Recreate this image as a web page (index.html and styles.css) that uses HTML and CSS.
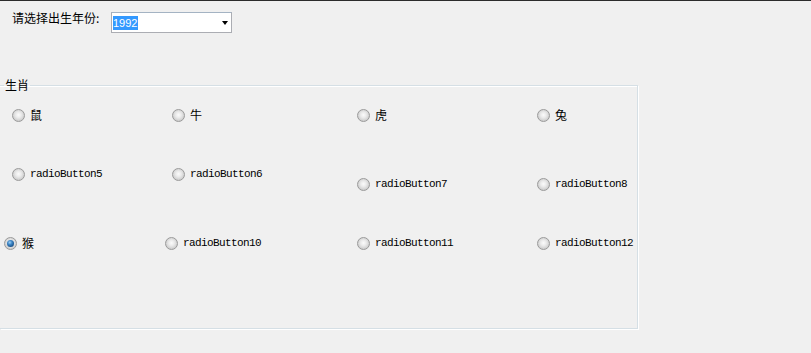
FILE: index.html
```html
<!DOCTYPE html>
<html lang="zh-CN">
<head>
    <meta charset="UTF-8">
    <title>生肖</title>
    <link rel="stylesheet" href="styles.css">
</head>
<body>

<div class="topbar">
    <label class="field-label" for="year">请选择出生年份:</label>
    <div class="combo" id="year">
        <span class="combo-value">1992</span>
        <span class="combo-arrow"></span>
    </div>
</div>

<fieldset class="zodiac">
    <legend>生肖</legend>
    <div class="radio-grid">
        <label class="radio-item"><span class="radio"></span><span>鼠</span></label>
        <label class="radio-item"><span class="radio"></span><span>牛</span></label>
        <label class="radio-item"><span class="radio"></span><span>虎</span></label>
        <label class="radio-item"><span class="radio"></span><span>兔</span></label>

        <label class="radio-item"><span class="radio"></span><span class="latin">radioButton5</span></label>
        <label class="radio-item"><span class="radio"></span><span class="latin">radioButton6</span></label>
        <label class="radio-item low"><span class="radio"></span><span class="latin">radioButton7</span></label>
        <label class="radio-item low"><span class="radio"></span><span class="latin">radioButton8</span></label>

        <label class="radio-item shift-8"><span class="radio checked"></span><span>猴</span></label>
        <label class="radio-item shift-7"><span class="radio"></span><span class="latin">radioButton10</span></label>
        <label class="radio-item"><span class="radio"></span><span class="latin">radioButton11</span></label>
        <label class="radio-item"><span class="radio"></span><span class="latin">radioButton12</span></label>
    </div>
</fieldset>

</body>
</html>
```

FILE: styles.css
```css
/* Windows form look */
body {
    margin: 0;
    height: 352px;
    background: #f0f0f0;
    border-top: 1px solid #2b2b2b;
    font-family: "Noto Sans CJK SC", sans-serif;
    font-size: 12px;
    color: #000;
    overflow: hidden;
}

.topbar {
    display: flex;
    align-items: flex-start;
    padding: 10px 0 0 12px;
}

.field-label {
    width: 99px;
    line-height: 14px;
}

.combo {
    margin-top: 1px;
    width: 121px;
    height: 21px;
    box-sizing: border-box;
    border: 1px solid #abadb3;
    border-top-color: #a4b3c3;
    background: #fff;
    display: flex;
    align-items: center;
    padding-left: 1px;
}

.combo-value {
    background: #3399ff;
    color: #fff;
    font-family: "Liberation Sans", sans-serif;
    font-size: 11px;
    line-height: 14px;
    padding: 0 1px 0 0;
}

.combo-arrow {
    margin-left: auto;
    margin-right: 3px;
    border-top: 4px solid #000;
    border-left: 3.5px solid transparent;
    border-right: 3.5px solid transparent;
}

.zodiac {
    margin: 45px 0 0 0;
    padding: 0;
    width: 637px;
    height: 251px;
    box-sizing: border-box;
    border: 1px solid #d5dfe5;
    border-left: none;
    box-shadow: inset 0 1px 0 #fff, 1px 1px 0 #fff;
}

.zodiac legend {
    margin-left: 4px;
    padding: 0 1px;
    line-height: 14px;
}

.radio-grid {
    display: grid;
    grid-template-columns: 160px 185px 180px 100px;
    grid-template-rows: 59px 69px auto;
    padding: 16px 0 0 12px;
}

.radio-item {
    display: flex;
    align-items: center;
    gap: 5px;
    height: 14px;
    line-height: 14px;
    white-space: nowrap;
}

.radio-item.low { margin-top: 10px; }
.radio-item.shift-8 { margin-left: -8px; }
.radio-item.shift-7 { margin-left: -7px; }

.radio {
    flex: none;
    position: relative;
    width: 13px;
    height: 13px;
    box-sizing: border-box;
    border-radius: 50%;
    border: 1px solid #9a9a9a;
    background: radial-gradient(circle at 50% 45%, #fbfbfb 0, #eaeaea 35%, #cfcfcf 70%, #e6e6e6 100%);
}

.radio.checked::after {
    content: "";
    position: absolute;
    left: 2px;
    top: 2px;
    width: 7px;
    height: 7px;
    border-radius: 50%;
    background: radial-gradient(circle at 40% 35%, #9fd0f5 0, #3d86c6 35%, #1a4f86 75%, #0d355e 100%);
}

.latin {
    font-family: "Liberation Mono", monospace;
    font-size: 11px;
    letter-spacing: -0.6px;
}
```
